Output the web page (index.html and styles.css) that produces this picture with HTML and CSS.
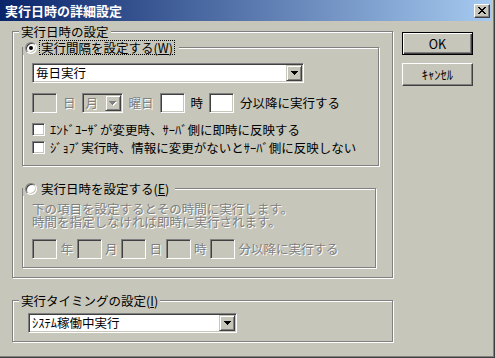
FILE: index.html
```html
<!DOCTYPE html>
<html lang="ja">
<head>
  <meta charset="UTF-8" />
  <title>実行日時の詳細設定</title>
  <link rel="stylesheet" href="styles.css">
</head>
<body>
  <div class="window">
    <div class="titlebar">
      <span class="title">実行日時の詳細設定</span>
      <span class="close">
        <svg width="8" height="7" viewBox="0 0 8 7" shape-rendering="crispEdges"><path fill="#000" d="M0 0h2v1h-2z M6 0h2v1h-2z M1 1h2v1h-2z M5 1h2v1h-2z M2 2h4v1h-4z M3 3h2v1h-2z M2 4h4v1h-4z M1 5h2v1h-2z M5 5h2v1h-2z M0 6h2v1h-2z M6 6h2v1h-2z"/></svg>
      </span>
    </div>

    <div class="content">
      <div class="main">
        <div class="group outer">
          <div class="legend caption">実行日時の設定</div>

          <div class="group inner interval">
            <div class="legend option">
              <span class="radio checked"></span>
              <span class="focus">実行間隔を設定する(<u>W</u>)</span>
            </div>

            <div class="combo wide">
              <span class="combo-text">毎日実行</span>
              <span class="drop">
                <svg width="7" height="4" viewBox="0 0 7 4" shape-rendering="crispEdges"><path fill="#000" d="M0 0h7v1h-7z M1 1h5v1h-5z M2 2h3v1h-3z M3 3h1v1h-1z"/></svg>
              </span>
            </div>

            <div class="row spaced">
              <span class="field off"></span>
              <span class="off">日</span>
              <div class="combo small disabled">
                <span class="combo-text off">月</span>
                <span class="drop">
                  <svg width="8" height="5" viewBox="0 0 8 5" shape-rendering="crispEdges"><path fill="#fff" d="M1 1h7v1h-7z M2 2h5v1h-5z M3 3h3v1h-3z M4 4h1v1h-1z"/><path fill="#808080" d="M0 0h7v1h-7z M1 1h5v1h-5z M2 2h3v1h-3z M3 3h1v1h-1z"/></svg>
                </span>
              </div>
              <span class="off">曜日</span>
              <span class="field"></span>
              <span>時</span>
              <span class="field"></span>
              <span>分以降に実行する</span>
            </div>

            <label class="check first"><span class="box"></span>ｴﾝﾄﾞﾕｰｻﾞが変更時、ｻｰﾊﾞ側に即時に反映する</label>
            <label class="check"><span class="box"></span>ｼﾞｮﾌﾞ実行時、情報に変更がないとｻｰﾊﾞ側に反映しない</label>
          </div>

          <div class="group inner datetime">
            <div class="legend option">
              <span class="radio"></span>
              <span class="focus blur">実行日時を設定する(<u>E</u>)</span>
            </div>

            <p class="note off">下の項目を設定するとその時間に実行します。<br>時間を指定しなければ即時に実行されます。</p>

            <div class="row tight">
              <span class="field off"></span>
              <span class="off">年</span>
              <span class="field off"></span>
              <span class="off">月</span>
              <span class="field off"></span>
              <span class="off">日</span>
              <span class="field off"></span>
              <span class="off">時</span>
              <span class="field off"></span>
              <span class="off">分以降に実行する</span>
            </div>
          </div>
        </div>

        <div class="group timing">
          <div class="legend caption">実行タイミングの設定(<u>I</u>)</div>
          <div class="combo medium">
            <span class="combo-text">ｼｽﾃﾑ稼働中実行</span>
            <span class="drop">
              <svg width="7" height="4" viewBox="0 0 7 4" shape-rendering="crispEdges"><path fill="#000" d="M0 0h7v1h-7z M1 1h5v1h-5z M2 2h3v1h-3z M3 3h1v1h-1z"/></svg>
            </span>
          </div>
        </div>
      </div>

      <div class="buttons">
        <button class="btn default">OK</button>
        <button class="btn">ｷｬﾝｾﾙ</button>
      </div>
    </div>
  </div>
</body>
</html>
```

FILE: styles.css
```css
:root {
  --bg: #c7c6ba;
  --shadow: #808080;
  --dark: #404040;
  --light: #ffffff;
}

body {
  margin: 0;
  font-family: "Noto Sans CJK JP", sans-serif;
  font-size: 12.5px;
  color: #000;
  background: var(--bg);
}

.window {
  width: 495px;
  height: 358px;
  box-sizing: border-box;
  padding: 0 2px 2px 0;
  background: var(--bg);
  border-right: 1px solid var(--dark);
  border-bottom: 1px solid var(--dark);
  box-shadow: inset -1px -1px var(--shadow);
}

/* title bar */
.titlebar {
  display: flex;
  align-items: center;
  justify-content: space-between;
  height: 21px;
  padding: 0 2px 0 5px;
  background: linear-gradient(to right, #0a246a, #a6caf0);
  color: #fff;
  font-weight: bold;
  font-size: 13px;
  line-height: 21px;
}

.close {
  display: flex;
  align-items: center;
  justify-content: center;
  width: 16px;
  height: 14px;
  box-sizing: border-box;
  background: var(--bg);
  border: 1px solid;
  border-color: var(--light) var(--dark) var(--dark) var(--light);
  box-shadow: inset -1px -1px var(--shadow);
}

.content {
  display: flex;
  align-items: flex-start;
}

.main {
  margin-left: 12px;
  width: 381px;
}

/* etched group boxes */
.group {
  border: 1px solid var(--shadow);
  box-shadow: 1px 1px var(--light), inset 1px 1px var(--light);
}

.legend {
  display: flex;
  align-items: center;
  width: max-content;
  height: 15px;
  line-height: 15px;
  margin-top: -8px;
  background: var(--bg);
}

.caption {
  padding: 0 2px;
}

.outer {
  margin-top: 10px;
  padding: 0 0 9px 9px;
}

.outer > .caption {
  margin-left: -3px;
}

.inner {
  padding: 0 0 8px 9px;
}

.interval {
  margin-top: 8px;
  width: 357px;
  box-sizing: border-box;
}

.datetime {
  margin-top: 22px;
  width: 354px;
  box-sizing: border-box;
}

.option {
  margin-left: -9px;
  padding: 0 4px 0 2px;
}

.focus {
  margin-left: 2px;
  padding: 0 1px;
  line-height: 13px;
  border: 1px dotted #000;
}

.focus.blur {
  border-color: transparent;
}

.timing {
  margin-top: 22px;
  padding: 0 0 8px 15px;
}

.timing > .caption {
  margin-left: -9px;
}

/* radio + checkbox */
.radio {
  position: relative;
  width: 12px;
  height: 12px;
  box-sizing: border-box;
  border-radius: 50%;
  border: 1px solid;
  border-color: var(--shadow) var(--light) var(--light) var(--shadow);
  box-shadow: inset 1px 1px var(--dark), inset -1px -1px var(--bg);
  background: #fff;
}

.radio.checked::after {
  content: "";
  position: absolute;
  left: 3px;
  top: 3px;
  width: 4px;
  height: 4px;
  border-radius: 50%;
  background: #000;
}

.check {
  display: flex;
  align-items: flex-start;
  height: 18px;
  line-height: 18px;
  white-space: nowrap;
}

.check.first {
  margin-top: 8px;
}

.box {
  width: 13px;
  height: 13px;
  margin: 2px 5px 0 0;
  box-sizing: border-box;
  border: 1px solid;
  border-color: var(--shadow) var(--light) var(--light) var(--shadow);
  box-shadow: inset 1px 1px var(--dark), inset -1px -1px var(--bg);
  background: #fff;
}

/* fields */
.field {
  width: 25px;
  height: 20px;
  box-sizing: border-box;
  border: 1px solid;
  border-color: var(--shadow) var(--light) var(--light) var(--shadow);
  box-shadow: inset 1px 1px var(--dark), inset -1px -1px var(--bg);
  background: #fff;
}

.field.off {
  background: var(--bg);
}

.off {
  color: var(--shadow);
  text-shadow: 1px 1px var(--light);
}

.combo {
  display: flex;
  align-items: center;
  height: 20px;
  box-sizing: border-box;
  padding: 1px;
  border: 1px solid;
  border-color: var(--shadow) var(--light) var(--light) var(--shadow);
  box-shadow: inset 1px 1px var(--dark), inset -1px -1px var(--bg);
  background: #fff;
}

.combo.wide {
  margin-top: 8px;
  width: 272px;
}

.combo.small {
  width: 41px;
}

.combo.medium {
  margin-top: 5px;
  width: 209px;
}

.combo.disabled {
  background: var(--bg);
}

.combo-text {
  flex: 1;
  padding-left: 2px;
  line-height: 16px;
  white-space: nowrap;
}

.drop {
  display: flex;
  align-items: center;
  justify-content: center;
  width: 16px;
  height: 16px;
  box-sizing: border-box;
  background: var(--bg);
  border: 1px solid;
  border-color: var(--bg) var(--dark) var(--dark) var(--bg);
  box-shadow: inset 1px 1px var(--light), inset -1px -1px var(--shadow);
}

.row {
  display: flex;
  align-items: center;
  height: 20px;
  line-height: 20px;
  white-space: nowrap;
}

.row.spaced {
  margin-top: 10px;
  gap: 6px;
}

.row.tight {
  margin-top: 11px;
  gap: 3.5px;
}

.note {
  margin: 6px 0 0;
  line-height: 13px;
}

/* push buttons */
.buttons {
  display: flex;
  flex-direction: column;
  gap: 8px;
  margin: 11px 0 0 9px;
}

.btn {
  width: 71px;
  height: 23px;
  box-sizing: border-box;
  padding: 0;
  font: inherit;
  color: #000;
  background: var(--bg);
  border: 1px solid;
  border-color: var(--light) var(--dark) var(--dark) var(--light);
  box-shadow: inset -1px -1px var(--shadow);
}

.btn.default {
  border-color: #000;
  box-shadow: inset 1px 1px var(--light), inset -1px -1px var(--dark), inset -2px -2px var(--shadow);
}
```
